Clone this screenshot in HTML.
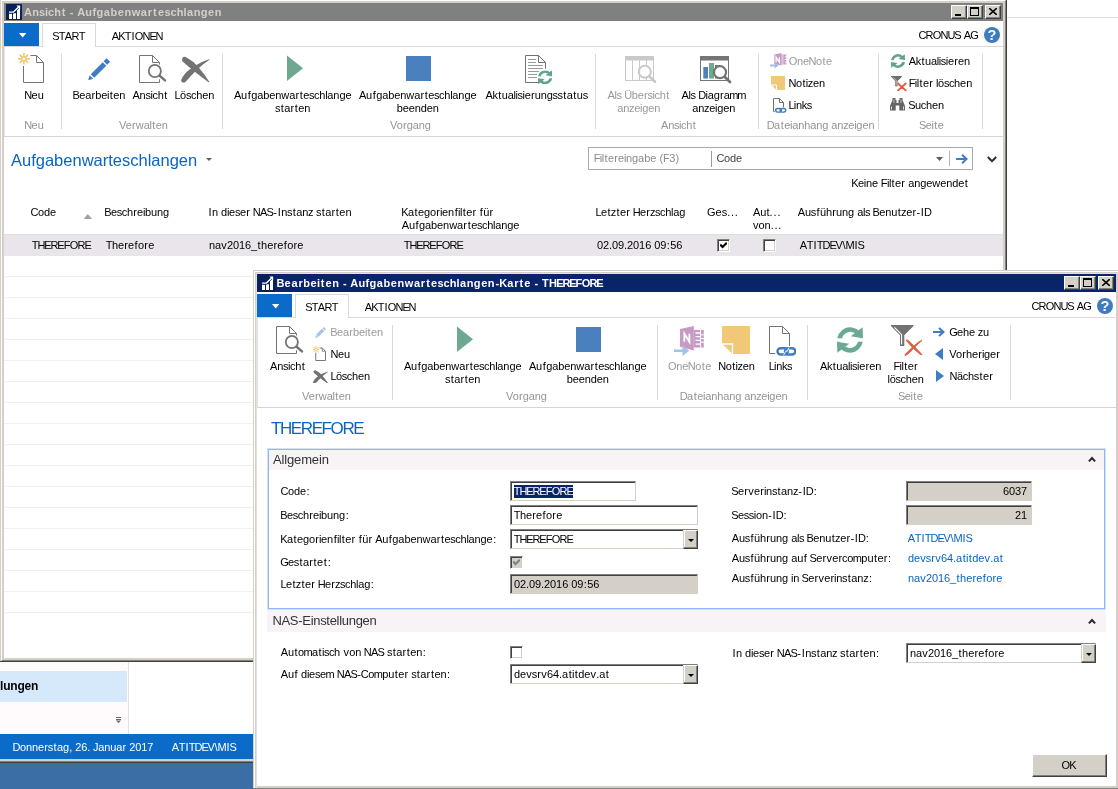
<!DOCTYPE html>
<html><head><meta charset="utf-8"><title>NAV</title>
<style>
*{box-sizing:border-box;margin:0;padding:0}
html,body{width:1118px;height:789px;overflow:hidden;background:#fff}
body{font-family:"Liberation Sans",sans-serif;font-size:11px;color:#000;position:relative;font-kerning:none}
.a{position:absolute}
.t{position:absolute;white-space:nowrap;line-height:13px;height:13px}
.c{text-align:center;transform:translateX(calc(-50% + .8px))}
.g{color:#9a9a9a}
.gl{color:#979397}
.sep{position:absolute;width:1px;background:#d9d9d9}
.win{position:absolute;background:#fff}
.tb{position:absolute;left:0;top:0;height:18px}
.tbtn{position:absolute;top:2px;width:16px;height:14px;background:#d4d0c8;border:1px solid;border-color:#fff #404040 #404040 #fff;box-shadow:inset -1px -1px 0 #808080}
.inp{position:absolute;background:#fff;border:1px solid;border-color:#808080 #d4d0c8 #d4d0c8 #808080;box-shadow:inset 1px 1px 0 #404040}
.inp.ro{background:#d4d0c8}
.inp>span{position:absolute;left:3px;top:3px;line-height:13px;white-space:nowrap}
.dd{position:absolute;right:-1px;top:0;bottom:-1px;width:15px;background:#d4d0c8;border:1px solid;border-color:#fff #404040 #404040 #d4d0c8;box-shadow:inset -1px -1px 0 #808080,inset 1px 0 0 #fff}
.dd:after{content:"";position:absolute;left:3.5px;top:8px;border:3px solid transparent;border-top:3px solid #000;border-bottom:none}
.cb{position:absolute;width:13px;height:13px;background:#fff;border:1px solid;border-color:#808080 #fff #fff #808080;box-shadow:inset 1px 1px 0 #404040,inset -1px -1px 0 #d4d0c8}
.lnk{color:#0a62c2}
.k0{letter-spacing:-0.95px;margin-left:-0.475px;margin-right:0.475px}.k1{letter-spacing:-0.10px;margin-left:-0.050px;margin-right:0.050px}.k2{letter-spacing:0.35px;margin-left:0.175px;margin-right:-0.175px}.k3{letter-spacing:-0.50px;margin-left:-0.250px;margin-right:0.250px}.k4{letter-spacing:0.95px;margin-left:0.475px;margin-right:-0.475px}.k5{letter-spacing:-0.05px;margin-left:-0.025px;margin-right:0.025px}.k6{letter-spacing:-0.35px;margin-left:-0.175px;margin-right:0.175px}.k7{letter-spacing:-0.70px;margin-left:-0.350px;margin-right:0.350px}.k8{letter-spacing:-1.35px;margin-left:-0.675px;margin-right:0.675px}.k9{letter-spacing:-1.15px;margin-left:-0.575px;margin-right:0.575px}.k10{letter-spacing:0.05px;margin-left:0.025px;margin-right:-0.025px}.k11{letter-spacing:0.30px;margin-left:0.150px;margin-right:-0.150px}.k12{letter-spacing:1.35px;margin-left:0.675px;margin-right:-0.675px}.k13{letter-spacing:0.90px;margin-left:0.450px;margin-right:-0.450px}.k14{letter-spacing:0.45px;margin-left:0.225px;margin-right:-0.225px}.k15{letter-spacing:0.70px;margin-left:0.350px;margin-right:-0.350px}.k16{letter-spacing:-0.55px;margin-left:-0.275px;margin-right:0.275px}.k17{letter-spacing:-1.55px;margin-left:-0.775px;margin-right:0.775px}.k18{letter-spacing:-0.45px;margin-left:-0.225px;margin-right:0.225px}.k19{letter-spacing:-1.10px;margin-left:-0.550px;margin-right:0.550px}.k20{letter-spacing:0.50px;margin-left:0.250px;margin-right:-0.250px}
</style></head><body><div id="root" style="position:absolute;left:0;top:0;width:1118px;height:789px;will-change:transform">


<svg width="0" height="0" style="position:absolute">
<defs>
 <!-- document outline 21x27 -->
 <symbol id="doc" viewBox="0 0 21 27"><path d="M.5 .5H13.5L20.5 7.5V26.5H.5Z" fill="#fff" stroke="#727272"/><path d="M13.5 .5V7.5H20.5" fill="none" stroke="#727272"/></symbol>
 <!-- view: doc + magnifier 28x28 -->
 <symbol id="view" viewBox="0 0 28 28"><path d="M.5 .5H13.5L20.5 7.5V27.5H.5Z" fill="#fff" stroke="#767476"/><path d="M13.5 .5V7.5H20.5" fill="none" stroke="#767476"/><circle cx="15.85" cy="16" r="8" fill="#fff"/><path d="M19.5 20L27 26.5" stroke="#fff" stroke-width="5"/><circle cx="15.85" cy="16" r="6.05" fill="#fff" stroke="#767476" stroke-width="1.8"/><path d="M20.6 20.8L26 25.4" stroke="#767476" stroke-width="2.5" stroke-linecap="round"/></symbol>
 <!-- star -->
 <symbol id="star" viewBox="0 0 12 12"><g stroke="#f1c465" stroke-width="1.5"><path d="M6 0V12M0 6H12M1.8 1.8L10.2 10.2M10.2 1.8L1.8 10.2"/></g><circle cx="6" cy="6" r="2.7" fill="#f1c465"/><circle cx="6" cy="6" r="1.5" fill="#fff"/></symbol>
 <!-- new: star + doc, 27x30 -->
 <symbol id="new" viewBox="0 0 27 31"><path d="M6.5 14V30.5H26.5V10.5L19.5 3.5H13.5" fill="#fff" stroke="#767476"/><path d="M19.5 3.5V10.5H26.5" fill="none" stroke="#767476"/><use href="#star" x=".9" y=".8" width="12" height="12"/></symbol>
 <!-- pencil 24x24 -->
 <symbol id="pencil" viewBox="0 0 22.5 22.5"><path d="M.2 22.3L1.7 17.3L5.2 20.8Z" fill="currentColor"/><path d="M2.73 16.23L14.73 4.23L18.27 7.77L6.27 19.77Z" fill="currentColor"/><path d="M15.63 3.33L18.63 .33L22.17 3.87L19.17 6.87Z" fill="currentColor"/></symbol>
 <!-- delete X 29x26 -->
 <symbol id="pencils" viewBox="0 0 22.5 22.5"><path d="M.2 22.3L2 16.2L6.3 20.5Z" fill="currentColor"/><path d="M2.6 15.4L14.2 3.8L18.7 8.3L7.1 19.9Z" fill="currentColor"/><path d="M15.4 2.6L18 0L22.5 4.5L19.9 7.1Z" fill="currentColor"/></symbol>
 <symbol id="del" viewBox="0 0 29 27"><path d="M1.3 2.2Q2.5 0 5.2 1.2Q12.5 5 17.8 11.5Q23.5 18.5 28.6 26.2Q28 26.6 27.2 26Q19.5 20.3 13.8 15.8Q6.5 9.8 1.6 5.4Q.6 3.6 1.3 2.2Z" fill="#747274"/><path d="M.4 23.4Q3 17.5 8.6 13.4Q17.5 6.5 28.8 2.9Q29 3.3 28.4 3.7Q20.5 9 15.2 14.6Q9 20.8 4.4 26Q2.2 27 .8 26Q-.2 25 .4 23.4Z" fill="#747274"/></symbol>
 <!-- refresh 26x26 -->
 <symbol id="refresh" viewBox="0 0 26 26"><g fill="none" stroke="currentColor" stroke-width="4.7"><path d="M2.6 14.5A10.65 10.65 0 0 1 21.3 6.4"/><path d="M23.4 11.5A10.65 10.65 0 0 1 4.7 19.6"/></g><rect x="0" y="11.3" width="26" height="3.4" fill="#fff"/><path d="M25.6 .3L26 11.3L13.8 9.3Z" fill="currentColor"/><path d="M.4 25.7L0 14.7L12.2 16.7Z" fill="currentColor"/></symbol>
 <!-- funnel + red x 32x31 -->
 <symbol id="funnel" viewBox="0 0 32 31"><path d="M0 0H22.5V1L13.3 10.2V21H9V10.2L0 1Z" fill="#737173"/><path d="M3.5 2.3L10.6 9.6V19.6" fill="none" stroke="#fff" stroke-width="1.1"/><g fill="#dc5f3f" stroke="#dc5f3f" stroke-width=".9" stroke-linejoin="round"><path d="M15 15.2Q16 14.4 17.4 15.6Q24 22 31 29.6Q30.4 30.2 29 29.2Q21 23 15 15.2Z"/><path d="M31 15.4Q29.5 15.6 27 17.5Q20 23 14 29.6Q13.6 30.8 15.2 30.2Q18 28.5 21.5 24.5Q26 19.5 31 15.4Z"/></g></symbol>
 <!-- onenote 31x30 -->
 <symbol id="onenote" viewBox="0 0 31 30"><path d="M6 3L19.8 0V24.5L6 20.8Z" fill="#c79ac4"/><path d="M19.8 3.9H29.8V21.5H19.8Z" fill="#c79ac4"/><g stroke="#fff" stroke-width="1.3"><path d="M21.5 7H26M21.5 10.7H26M21.5 14.4H26M21.5 18.1H26"/><path d="M26.6 3.9V21.5" stroke-width="1"/><path d="M27 8.8H30M27 12.5H30M27 16.2H30" stroke-width="1"/></g><path d="M10.3 15.8V7.7L15.4 15.8V7.7" fill="none" stroke="#fff" stroke-width="1.8"/><path d="M0 23.5H8.5V19.6L15.2 24.8L8.5 30V26H0Z" fill="#a3c3e4"/></symbol>
 <!-- note 28x28 -->
 <symbol id="note" viewBox="0 0 28 28"><path d="M0 0H28V28H10.5L0 17.5Z" fill="#f1c778"/><path d="M0 18H10.5V28" fill="none" stroke="#fff" stroke-width="1.3"/></symbol>
 <!-- link doc 27x30 -->
 <symbol id="linkdoc" viewBox="0 0 27 30"><path d="M.5 .5H13.5L20.5 7.5V27.5H.5Z" fill="#fff" stroke="#767476"/><path d="M13.5 .5V7.5H20.5" fill="none" stroke="#767476"/><rect x="6.3" y="20" width="21" height="10" fill="#fff"/><g fill="none" stroke="#3f7cc4" stroke-width="2.4"><rect x="8.5" y="22.2" width="10.3" height="6.3" rx="3.15"/><rect x="16" y="22.2" width="10.3" height="6.3" rx="3.15"/></g><path d="M14.6 29.2L17.2 24.6M17.6 26L20.2 21.4" stroke="#fff" stroke-width=".9"/></symbol>
</defs>
</svg>
<!-- ===== background pieces (other window behind) ===== -->
<div class="a" id="bgline" style="left:1007px;top:17px;width:111px;height:1px;background:#e3e3e3"></div>
<div class="a" id="navpane" style="left:0;top:662px;width:128px;height:72px;background:#fffbfd"></div>
<div class="a" style="left:0;top:671px;width:127px;height:31px;background:#d6e9fb"></div>
<div class="t" style="left:0;top:680px;font-weight:700;font-size:12px;letter-spacing:-0.2px">lungen</div><svg class="a" style="left:116px;top:717px" width="5" height="6" viewBox="0 0 5 6"><path d="M0 .5H5M0 2.5H5" stroke="#666" stroke-width="1"/><path d="M0 3.5H5L2.5 6Z" fill="#666"/></svg>
<div class="a" style="left:128px;top:662px;width:1px;height:72px;background:#e2e2e2"></div>
<div class="a" id="status" style="left:0;top:734px;width:253px;height:25px;background:#0a6bc8"></div>
<div class="t" style="left:13px;top:741px;color:#fff"><span class=k0>D</span><span class=k1>onne</span><span class=k2>r</span><span class=k3>s</span><span class=k4>t</span><span class=k1>ag</span><span class=k5>, </span><span class=k1>26</span><span class=k5>. </span><span class=k3>J</span><span class=k1>anua</span><span class=k2>r</span><span class=k5> </span><span class=k1>2017</span></div>
<div class="t" style="left:172px;top:741px;color:#fff"><span class=k6>A</span><span class=k7>T</span><span class=k4>I</span><span class=k7>T</span><span class=k0>D</span><span class=k8>EV</span><span class=k4>\</span><span class=k9>M</span><span class=k4>I</span><span class=k8>S</span></div>
<div class="a" style="left:0;top:759px;width:253px;height:2px;background:#d4d0c8"></div><div class="a" style="left:0;top:761px;width:253px;height:1px;background:#808080"></div><div class="a" style="left:0;top:762px;width:253px;height:1px;background:#404040"></div>
<div class="a" style="left:0;top:763px;width:253px;height:26px;background:#3a6ea5"></div>

<!-- ===== WINDOW 1 ===== -->
<div class="a" id="w1f" style="left:0;top:0;width:1007px;height:662px;background:#d4d0c8;border-right:1px solid #404040;border-bottom:1px solid #404040"></div>
<div class="a" style="left:1px;top:0;width:1005px;height:661px;border:1px solid #fff;border-right-color:#808080;border-bottom-color:#808080"></div>
<div class="a" id="w1c" style="left:4px;top:3px;width:999px;height:655px;background:#fff"></div>
<div class="a" id="w1tb" style="left:4px;top:3px;width:999px;height:18px;background:#808080"></div>
<svg class="a" style="left:6px;top:4px" width="16" height="16" viewBox="0 0 16 16"><rect width="16" height="16" fill="#03215c"/><rect x="3" y="9.6" width="3" height="5.4" fill="#fff"/><rect x="7" y="9.2" width="3" height="5.8" fill="#fff"/><rect x="11" y="3" width="3" height="12" fill="#fff"/><path d="M2.6 8.1H7.4L12.6 2.9" stroke="#03215c" stroke-width="2.6" fill="none"/><path d="M3 8.1H7.4L12.6 2.9" stroke="#fff" stroke-width="1.35" fill="none"/><path d="M10.4 1.6H14.2V5.4Z" fill="#fff"/></svg>
<div class="t" style="left:24px;top:6px;font-weight:700;color:#d4d0c8"><span class=k10>A</span><span class=k11>n</span><span class=k1>s</span><span class=k5>i</span><span class=k1>c</span><span class=k11>h</span><span class=k12>t</span><span class=k5> </span><span class=k12>-</span><span class=k5> </span><span class=k10>A</span><span class=k11>u</span><span class=k2>f</span><span class=k11>g</span><span class=k13>a</span><span class=k11>b</span><span class=k13>e</span><span class=k11>n</span><span class=k14>w</span><span class=k13>a</span><span class=k15>r</span><span class=k12>t</span><span class=k13>e</span><span class=k1>sc</span><span class=k11>h</span><span class=k5>l</span><span class=k13>a</span><span class=k11>ng</span><span class=k13>e</span><span class=k11>n</span></div>
<div class="tbtn" style="left:951px;top:5px"><i class="a" style="left:3px;top:8px;width:6px;height:2px;background:#000"></i></div>
<div class="tbtn" style="left:967px;top:5px"><i class="a" style="left:2px;top:1px;width:9px;height:9px;border:1px solid #000;border-top-width:2px"></i></div>
<div class="tbtn" style="left:985px;top:5px"><svg class="a" style="left:3px;top:2px" width="8" height="7" viewBox="0 0 8 7"><path d="M0 0L8 7M8 0L0 7" stroke="#000" stroke-width="1.6"/></svg></div>

<!-- tabs -->
<div class="a" style="left:4px;top:46px;width:999px;height:1px;background:#d9d9d9"></div>
<div class="a" style="left:4px;top:23px;width:35px;height:23px;background:#0a6bc8"></div>
<svg class="a" style="left:19px;top:33px" width="7.4" height="4.6" viewBox="0 0 7.4 4.6"><path d="M0 0H7.4L3.7 4.6Z" fill="#fff"/></svg>
<div class="a" style="left:42px;top:23px;width:54px;height:24px;background:#fff;border:1px solid #d9d9d9;border-bottom:none"></div>
<div class="t" style="left:53px;top:30px"><span class=k8>S</span><span class=k7>T</span><span class=k6>A</span><span class=k0>R</span><span class=k7>T</span></div>
<div class="t" style="left:112px;top:30px"><span class=k6>A</span><span class=k8>K</span><span class=k7>T</span><span class=k4>I</span><span class=k16>O</span><span class=k0>N</span><span class=k8>E</span><span class=k0>N</span></div>
<div class="t" style="left:919px;top:29px"><span class=k0>CR</span><span class=k16>O</span><span class=k0>NU</span><span class=k8>S</span><span class=k5> </span><span class=k6>A</span><span class=k17>G</span></div>
<svg class="a" style="left:984px;top:27px" width="16" height="16" viewBox="0 0 16 16"><circle cx="8" cy="8" r="8" fill="#3f7cbc"/><text x="8" y="13.2" font-family="Liberation Sans" font-weight="700" font-size="14.5" fill="#fff" text-anchor="middle">?</text></svg>

<!-- ribbon -->
<div class="a" style="left:4px;top:136px;width:999px;height:1px;background:#d5d5d5"></div><div class="a" style="left:4px;top:47px;width:1px;height:89px;background:#e4e4e4"></div>
<div class="sep" style="left:61px;top:54px;height:75px"></div>
<div class="sep" style="left:222px;top:54px;height:75px"></div>
<div class="sep" style="left:595px;top:54px;height:75px"></div>
<div class="sep" style="left:758px;top:54px;height:75px"></div>
<div class="sep" style="left:878px;top:54px;height:75px"></div>
<div class="sep" style="left:982px;top:54px;height:75px"></div>

<div class="t c" style="left:33.4px;top:89px"><span class=k0>N</span><span class=k1>eu</span></div>
<div class="t c" style="left:98.5px;top:89px"><span class=k8>B</span><span class=k1>ea</span><span class=k2>r</span><span class=k1>be</span><span class=k18>i</span><span class=k4>t</span><span class=k1>en</span></div>
<div class="t c" style="left:149.4px;top:89px"><span class=k6>A</span><span class=k1>n</span><span class=k3>s</span><span class=k18>i</span><span class=k3>c</span><span class=k1>h</span><span class=k4>t</span></div>
<div class="t c" style="left:193.9px;top:89px"><span class=k19>L</span><span class=k1>ö</span><span class=k3>sc</span><span class=k1>hen</span></div>
<div class="t c" style="left:292px;top:89px"><span class=k6>A</span><span class=k1>u</span><span class=k4>f</span><span class=k1>gaben</span><span class=k10>w</span><span class=k1>a</span><span class=k2>r</span><span class=k4>t</span><span class=k1>e</span><span class=k3>sc</span><span class=k1>h</span><span class=k18>l</span><span class=k1>ange</span></div>
<div class="t c" style="left:292px;top:102px"><span class=k3>s</span><span class=k4>t</span><span class=k1>a</span><span class=k2>r</span><span class=k4>t</span><span class=k1>en</span></div>
<div class="t c" style="left:417px;top:89px"><span class=k6>A</span><span class=k1>u</span><span class=k4>f</span><span class=k1>gaben</span><span class=k10>w</span><span class=k1>a</span><span class=k2>r</span><span class=k4>t</span><span class=k1>e</span><span class=k3>sc</span><span class=k1>h</span><span class=k18>l</span><span class=k1>ange</span></div>
<div class="t c" style="left:417px;top:102px"><span class=k1>beenden</span></div>
<div class="t c" style="left:536px;top:89px"><span class=k6>A</span><span class=k3>k</span><span class=k4>t</span><span class=k1>ua</span><span class=k18>li</span><span class=k3>s</span><span class=k18>i</span><span class=k1>e</span><span class=k2>r</span><span class=k1>ung</span><span class=k3>ss</span><span class=k4>t</span><span class=k1>a</span><span class=k4>t</span><span class=k1>u</span><span class=k3>s</span></div>
<div class="t c g" style="left:638px;top:89px"><span class=k6>A</span><span class=k18>l</span><span class=k3>s</span><span class=k5> </span><span class=k0>Ü</span><span class=k1>be</span><span class=k2>r</span><span class=k3>s</span><span class=k18>i</span><span class=k3>c</span><span class=k1>h</span><span class=k4>t</span></div>
<div class="t c g" style="left:638px;top:102px"><span class=k1>an</span><span class=k3>z</span><span class=k1>e</span><span class=k18>i</span><span class=k1>gen</span></div>
<div class="t c" style="left:713px;top:89px"><span class=k6>A</span><span class=k18>l</span><span class=k3>s</span><span class=k5> </span><span class=k0>D</span><span class=k18>i</span><span class=k1>ag</span><span class=k2>r</span><span class=k1>a</span><span class=k9>mm</span></div>
<div class="t c" style="left:713px;top:102px"><span class=k1>an</span><span class=k3>z</span><span class=k1>e</span><span class=k18>i</span><span class=k1>gen</span></div>
<div class="t g" style="left:789px;top:55px"><span class=k16>O</span><span class=k1>ne</span><span class=k0>N</span><span class=k1>o</span><span class=k4>t</span><span class=k1>e</span></div>
<div class="t" style="left:789px;top:77px"><span class=k0>N</span><span class=k1>o</span><span class=k4>t</span><span class=k18>i</span><span class=k3>z</span><span class=k1>en</span></div>
<div class="t" style="left:789px;top:99px"><span class=k19>L</span><span class=k18>i</span><span class=k1>n</span><span class=k3>ks</span></div>
<div class="t" style="left:909px;top:55px"><span class=k6>A</span><span class=k3>k</span><span class=k4>t</span><span class=k1>ua</span><span class=k18>li</span><span class=k3>s</span><span class=k18>i</span><span class=k1>e</span><span class=k2>r</span><span class=k1>en</span></div>
<div class="t" style="left:909px;top:77px"><span class=k7>F</span><span class=k18>il</span><span class=k4>t</span><span class=k1>e</span><span class=k2>r</span><span class=k5> </span><span class=k18>l</span><span class=k1>ö</span><span class=k3>sc</span><span class=k1>hen</span></div>
<div class="t" style="left:909px;top:99px"><span class=k8>S</span><span class=k1>u</span><span class=k3>c</span><span class=k1>hen</span></div>
<div class="t c gl" style="left:33.4px;top:119px"><span class=k0>N</span><span class=k1>eu</span></div>
<div class="t c gl" style="left:143px;top:119px"><span class=k8>V</span><span class=k1>e</span><span class=k2>r</span><span class=k10>w</span><span class=k1>a</span><span class=k18>l</span><span class=k4>t</span><span class=k1>en</span></div>
<div class="t c gl" style="left:410px;top:119px"><span class=k8>V</span><span class=k1>o</span><span class=k2>r</span><span class=k1>gang</span></div>
<div class="t c gl" style="left:678px;top:119px"><span class=k6>A</span><span class=k1>n</span><span class=k3>s</span><span class=k18>i</span><span class=k3>c</span><span class=k1>h</span><span class=k4>t</span></div>
<div class="t c gl" style="left:820px;top:119px"><span class=k0>D</span><span class=k1>a</span><span class=k4>t</span><span class=k1>e</span><span class=k18>i</span><span class=k1>anhang</span><span class=k5> </span><span class=k1>an</span><span class=k3>z</span><span class=k1>e</span><span class=k18>i</span><span class=k1>gen</span></div>
<div class="t c gl" style="left:931px;top:119px"><span class=k8>S</span><span class=k1>e</span><span class=k18>i</span><span class=k4>t</span><span class=k1>e</span></div>


<!-- w1 icons -->
<svg class="a" style="left:17px;top:52px" width="27" height="31"><use href="#new"/></svg>
<svg class="a" style="left:87.8px;top:57.5px;color:#3f7cc4" width="22.5" height="22.5"><use href="#pencil"/></svg>
<svg class="a" style="left:139px;top:55px" width="28" height="28"><use href="#view"/></svg>
<svg class="a" style="left:180.5px;top:55.5px" width="29" height="27"><use href="#del"/></svg>
<svg class="a" style="left:287px;top:55px" width="17" height="27" viewBox="0 0 17 27"><path d="M0 .5L16 13.3L0 26Z" fill="#6fa890"/></svg>
<div class="a" style="left:406px;top:56px;width:25px;height:25px;background:#4a80be"></div>
<svg class="a" style="left:525px;top:55px" width="30" height="30" viewBox="0 0 30 30"><path d="M.5 .5H13.5L20.5 7.5V27.5H.5Z" fill="#fff" stroke="#727072"/><path d="M13.5 .5V7.5H20.5" fill="none" stroke="#727072"/><path d="M3 4.5H11M3 7.5H11M3 10.5H18M3 13.5H18M3 16.5H14M3 19.5H12M3 22.5H12" stroke="#9b999b"/><circle cx="20" cy="22" r="8.2" fill="#fff"/><svg x="13" y="15.2" width="14.2" height="14.2" style="color:#5fa48a"><use href="#refresh"/></svg></svg>
<svg class="a" style="left:625px;top:56px" width="32" height="28" viewBox="0 0 32 28"><rect x=".5" y=".5" width="28" height="24" fill="#fff" stroke="#c9c9c9"/><rect x="0" y="0" width="29" height="4.5" fill="#c9c9c9"/><path d="M7.5 4V24M14.5 4V24M21.5 4V24" stroke="#c9c9c9"/><circle cx="19.8" cy="15.8" r="6" fill="#fff" stroke="#c9c9c9" stroke-width="2"/><path d="M24.3 20.3L30 25.8" stroke="#c9c9c9" stroke-width="2.6" stroke-linecap="round"/></svg>
<svg class="a" style="left:700px;top:56px" width="32" height="28" viewBox="0 0 32 28"><rect x=".5" y=".5" width="28" height="24" fill="#fff" stroke="#767476"/><rect x="0" y="0" width="29" height="4.5" fill="#767476"/><rect x="3.3" y="11" width="4.7" height="11.5" fill="#4a80be"/><rect x="9" y="7" width="5" height="15.5" fill="#6fa890"/><rect x="15" y="9" width="5" height="13.5" fill="#767476"/><circle cx="20" cy="16.2" r="6" fill="#fff" stroke="#767476" stroke-width="2.2"/><path d="M24.6 20.8L30 26" stroke="#767476" stroke-width="2.8" stroke-linecap="round"/></svg>
<svg class="a" style="left:770px;top:53px" width="17" height="16" viewBox="0 0 17 16"><path d="M4.3 1.6L11.6 0V12.6L4.3 11Z" fill="#c79ac4"/><rect x="11.6" y="1.5" width="4.6" height="10" fill="#c79ac4"/><path d="M12.9 1.5V11.5" stroke="#fff" stroke-width=".7"/><path d="M14.6 3.9H16.2M14.6 6.5H16.2M14.6 9.1H16.2" stroke="#fff" stroke-width=".8"/><path d="M6.1 9.3V4.2L9.4 9.3V4.2" fill="none" stroke="#fff" stroke-width="1.25"/><path d="M0 11.6H4.6V9.6L8.6 12.6L4.6 15.6V13.6H0Z" fill="#9dbfe2"/></svg>
<svg class="a" style="left:771px;top:76px" width="14" height="14" viewBox="0 0 14 14"><path d="M0 0H14V14H5.5L0 8.5Z" fill="#f1c778"/><path d="M0 9H5.5V14" fill="none" stroke="#fff" stroke-width="1"/></svg>
<svg class="a" style="left:773px;top:98px" width="14" height="16" viewBox="0 0 14 16"><path d="M.5 .5H6.5L10.5 4.5V13.5H.5Z" fill="#fff" stroke="#727072"/><path d="M6.5 .5V4.5H10.5" fill="none" stroke="#727072"/><rect x="1.6" y="9.3" width="12.4" height="6.7" fill="#fff"/><g fill="none" stroke="#3f7cc4" stroke-width="1.4"><rect x="2.7" y="10.5" width="5.6" height="3.6" rx="1.8"/><rect x="7.1" y="10.5" width="5.6" height="3.6" rx="1.8"/></g></svg>
<svg class="a" style="left:891px;top:54.2px;color:#5fa48a" width="14" height="14"><use href="#refresh"/></svg>
<svg class="a" style="left:891px;top:76px" width="15.5" height="15" viewBox="0 0 32 31"><path d="M0 0H22.5V1.5L13.6 10.2V21H8.6V10.2L0 1.5Z" fill="#6f6d6f"/><path d="M4.5 3L10.8 9.5V19" fill="none" stroke="#fff" stroke-width="1.2"/><path d="M14.5 15.5L30.5 30M30.5 15.5L14.5 30" stroke="#dc5f3f" stroke-width="3.6" stroke-linecap="round"/></svg>
<svg class="a" style="left:890px;top:98px" width="15" height="13" viewBox="0 0 15 13"><path d="M2.5 0H5.5V2H6.5V5H8.5V2H9.5V0H12.5V2L15 8V12.5H9.3V7.5H5.7V12.5H0V8L2.5 2Z" fill="#656365"/><path d="M1.5 8.5V11.5M13.5 8.5V11.5" stroke="#fff" stroke-width=".8"/><path d="M4 1.5V5M11 1.5V5" stroke="#fff" stroke-width=".6"/></svg>
<!-- page header -->
<div class="t" style="left:11px;top:150px;font-size:16.5px;line-height:20px;height:20px;color:#0a64c4">Aufgabenwarteschlangen</div>
<svg class="a" style="left:206px;top:158px" width="6" height="3" viewBox="0 0 6 3"><path d="M0 0H6L3 3Z" fill="#5e5e5e"/></svg>
<div class="a" style="left:588px;top:147px;width:385px;height:23px;border:1px solid #a9a9a9;background:#fff"></div>
<div class="t" style="left:594px;top:152px;color:#8c8c8c"><span class=k7>F</span><span class=k18>il</span><span class=k4>t</span><span class=k1>e</span><span class=k2>r</span><span class=k1>e</span><span class=k18>i</span><span class=k1>ngabe</span><span class=k5> </span><span class=k2>(</span><span class=k7>F</span><span class=k1>3</span><span class=k2>)</span></div>
<div class="a" style="left:711px;top:151px;width:1px;height:16px;background:#9a9a9a"></div>
<div class="t" style="left:717px;top:152px;color:#444"><span class=k0>C</span><span class=k1>ode</span></div>
<svg class="a" style="left:936px;top:157px" width="7" height="4" viewBox="0 0 7 4"><path d="M0 0H7L3.5 4Z" fill="#5e5e5e"/></svg>
<div class="a" style="left:949px;top:151px;width:1px;height:15px;background:#b4b4b4"></div>
<svg class="a" style="left:956px;top:154px" width="12" height="10" viewBox="0 0 12 10"><path d="M0 5H10M6 .8L10.6 5L6 9.2" fill="none" stroke="#3f7cc4" stroke-width="2"/></svg>
<svg class="a" style="left:986.5px;top:155.5px" width="10" height="7" viewBox="0 0 10 7"><path d="M.8 1L5 5.2L9.2 1" stroke="#2a2a2a" stroke-width="2" fill="none"/></svg>
<div class="t" style="left:852px;top:177px"><span class=k8>K</span><span class=k1>e</span><span class=k18>i</span><span class=k1>ne</span><span class=k5> </span><span class=k7>F</span><span class=k18>il</span><span class=k4>t</span><span class=k1>e</span><span class=k2>r</span><span class=k5> </span><span class=k1>ange</span><span class=k10>w</span><span class=k1>ende</span><span class=k4>t</span></div>

<!-- list header -->
<div class="t" style="left:31px;top:206px"><span class=k0>C</span><span class=k1>ode</span></div>
<svg class="a" style="left:83px;top:213.6px" width="9.6" height="5.6" viewBox="0 0 9.6 5.6"><path d="M0 5.6L4.8 0L9.6 5.6Z" fill="#a2a2a2"/></svg>
<div class="t" style="left:105px;top:206px"><span class=k8>B</span><span class=k1>e</span><span class=k3>sc</span><span class=k1>h</span><span class=k2>r</span><span class=k1>e</span><span class=k18>i</span><span class=k1>bung</span></div>
<div class="t" style="left:208px;top:206px"><span class=k4>I</span><span class=k1>n</span><span class=k5> </span><span class=k1>d</span><span class=k18>i</span><span class=k1>e</span><span class=k3>s</span><span class=k1>e</span><span class=k2>r</span><span class=k5> </span><span class=k0>N</span><span class=k6>A</span><span class=k8>S</span><span class=k2>-</span><span class=k4>I</span><span class=k1>n</span><span class=k3>s</span><span class=k4>t</span><span class=k1>an</span><span class=k3>z</span><span class=k5> </span><span class=k3>s</span><span class=k4>t</span><span class=k1>a</span><span class=k2>r</span><span class=k4>t</span><span class=k1>en</span></div>
<div class="t" style="left:402px;top:206px"><span class=k8>K</span><span class=k1>a</span><span class=k4>t</span><span class=k1>ego</span><span class=k2>r</span><span class=k18>i</span><span class=k1>en</span><span class=k4>f</span><span class=k18>il</span><span class=k4>t</span><span class=k1>e</span><span class=k2>r</span><span class=k5> </span><span class=k4>f</span><span class=k1>ü</span><span class=k2>r</span></div>
<div class="t" style="left:402px;top:219px"><span class=k6>A</span><span class=k1>u</span><span class=k4>f</span><span class=k1>gaben</span><span class=k10>w</span><span class=k1>a</span><span class=k2>r</span><span class=k4>t</span><span class=k1>e</span><span class=k3>sc</span><span class=k1>h</span><span class=k18>l</span><span class=k1>ange</span></div>
<div class="t" style="left:596px;top:206px"><span class=k19>L</span><span class=k1>e</span><span class=k4>t</span><span class=k3>z</span><span class=k4>t</span><span class=k1>e</span><span class=k2>r</span><span class=k5> </span><span class=k0>H</span><span class=k1>e</span><span class=k2>r</span><span class=k3>zsc</span><span class=k1>h</span><span class=k18>l</span><span class=k1>ag</span></div>
<div class="t nofit" style="left:707px;top:206px">Ges<span style="letter-spacing:0.7px">...</span></div>
<div class="t nofit" style="left:753px;top:206px">Aut<span style="letter-spacing:0.9px">...</span></div>
<div class="t nofit" style="left:753px;top:219px">von<span style="letter-spacing:0.7px">...</span></div>
<div class="t" style="left:798px;top:206px"><span class=k6>A</span><span class=k1>u</span><span class=k3>s</span><span class=k4>f</span><span class=k1>üh</span><span class=k2>r</span><span class=k1>ung</span><span class=k5> </span><span class=k1>a</span><span class=k18>l</span><span class=k3>s</span><span class=k5> </span><span class=k8>B</span><span class=k1>enu</span><span class=k4>t</span><span class=k3>z</span><span class=k1>e</span><span class=k2>r-</span><span class=k4>I</span><span class=k0>D</span></div>
<!-- row -->
<div class="a" style="left:4px;top:234px;width:999px;height:22px;background:#e9e5ea;border-top:1px solid #e0dde2"></div>
<div class="t" style="left:32px;top:239px"><span class=k7>T</span><span class=k0>H</span><span class=k8>E</span><span class=k0>R</span><span class=k8>E</span><span class=k7>F</span><span class=k16>O</span><span class=k0>R</span><span class=k8>E</span></div>
<div class="t" style="left:106px;top:239px"><span class=k7>T</span><span class=k1>he</span><span class=k2>r</span><span class=k1>e</span><span class=k4>f</span><span class=k1>o</span><span class=k2>r</span><span class=k1>e</span></div>
<div class="t" style="left:209px;top:239px"><span class=k1>na</span><span class=k20>v</span><span class=k1>2016_</span><span class=k4>t</span><span class=k1>he</span><span class=k2>r</span><span class=k1>e</span><span class=k4>f</span><span class=k1>o</span><span class=k2>r</span><span class=k1>e</span></div>
<div class="t" style="left:404px;top:239px"><span class=k7>T</span><span class=k0>H</span><span class=k8>E</span><span class=k0>R</span><span class=k8>E</span><span class=k7>F</span><span class=k16>O</span><span class=k0>R</span><span class=k8>E</span></div>
<div class="t" style="left:597px;top:239px"><span class=k1>02</span><span class=k5>.</span><span class=k1>09</span><span class=k5>.</span><span class=k1>2016</span><span class=k5> </span><span class=k1>09</span><span class=k4>:</span><span class=k1>56</span></div>
<div class="cb" style="left:717px;top:239px"><svg class="a" style="left:2px;top:2px" width="7" height="7" viewBox="0 0 7 7"><path d="M.2 2.6L2.6 5L6.8 .8" stroke="#000" stroke-width="2.1" fill="none"/></svg></div>
<div class="cb" style="left:763px;top:239px"></div>
<div class="t" style="left:800px;top:239px"><span class=k6>A</span><span class=k7>T</span><span class=k4>I</span><span class=k7>T</span><span class=k0>D</span><span class=k8>EV</span><span class=k4>\</span><span class=k9>M</span><span class=k4>I</span><span class=k8>S</span></div>
<!-- grid lines -->
<div class="a" id="gridl" style="left:4px;top:276px;width:999px;height:338px;background:repeating-linear-gradient(#f3eef2 0,#f3eef2 1px,transparent 1px,transparent 21px)"></div>

<!-- ===== WINDOW 2 ===== -->
<div class="a" id="w2f" style="left:253px;top:270px;width:865px;height:519px;background:#d4d0c8;border-bottom:1px solid #808080"></div>
<div class="a" style="left:254px;top:271px;width:864px;height:517px;border:1px solid #fff;border-right:none;border-bottom:none"></div>
<div class="a" style="left:256px;top:273px;width:862px;height:515px;border:1px solid #e4e0d8;border-right:none;border-bottom:none"></div><div class="a" id="w2c" style="left:257px;top:274px;width:859px;height:512px;background:#fff"></div>
<div class="a" id="w2tb" style="left:257px;top:274px;width:859px;height:18px;background:#0a246a"></div>

<svg class="a" style="left:258px;top:274px" width="17" height="18" viewBox="-1 -1 17 18"><rect x="-1" y="-1" width="17" height="18" fill="#06205c"/><rect x="3" y="9.6" width="3" height="5.4" fill="#fff"/><rect x="7" y="9.2" width="3" height="5.8" fill="#fff"/><rect x="11" y="3" width="3" height="12" fill="#fff"/><path d="M2.6 8.1H7.4L12.6 2.9" stroke="#03215c" stroke-width="2.6" fill="none"/><path d="M3 8.1H7.4L12.6 2.9" stroke="#fff" stroke-width="1.35" fill="none"/><path d="M10.4 1.6H14.2V5.4Z" fill="#fff"/></svg>
<div class="t" style="left:277px;top:277px;font-weight:700;color:#fff"><span class=k0>B</span><span class=k13>ea</span><span class=k15>r</span><span class=k11>b</span><span class=k13>e</span><span class=k5>i</span><span class=k12>t</span><span class=k13>e</span><span class=k11>n</span><span class=k5> </span><span class=k12>-</span><span class=k5> </span><span class=k10>A</span><span class=k11>u</span><span class=k2>f</span><span class=k11>g</span><span class=k13>a</span><span class=k11>b</span><span class=k13>e</span><span class=k11>n</span><span class=k14>w</span><span class=k13>a</span><span class=k15>r</span><span class=k12>t</span><span class=k13>e</span><span class=k1>sc</span><span class=k11>h</span><span class=k5>l</span><span class=k13>a</span><span class=k11>ng</span><span class=k13>e</span><span class=k11>n</span><span class=k12>-</span><span class=k0>K</span><span class=k13>a</span><span class=k15>r</span><span class=k12>t</span><span class=k13>e</span><span class=k5> </span><span class=k12>-</span><span class=k5> </span><span class=k11>T</span><span class=k10>H</span><span class=k8>E</span><span class=k0>R</span><span class=k8>E</span><span class=k7>F</span><span class=k16>O</span><span class=k0>R</span><span class=k8>E</span></div>
<div class="tbtn" style="left:1064px;top:276px"><i class="a" style="left:3px;top:8px;width:6px;height:2px;background:#000"></i></div>
<div class="tbtn" style="left:1080px;top:276px"><i class="a" style="left:2px;top:1px;width:9px;height:9px;border:1px solid #000;border-top-width:2px"></i></div>
<div class="tbtn" style="left:1098px;top:276px"><svg class="a" style="left:3px;top:2px" width="8" height="7" viewBox="0 0 8 7"><path d="M0 0L8 7M8 0L0 7" stroke="#000" stroke-width="1.6"/></svg></div>

<!-- tabs -->
<div class="a" style="left:257px;top:317px;width:858px;height:1px;background:#d9d9d9"></div>
<div class="a" style="left:257px;top:294px;width:35px;height:23px;background:#0a6bc8"></div>
<svg class="a" style="left:272px;top:304px" width="7.4" height="4.6" viewBox="0 0 7.4 4.6"><path d="M0 0H7.4L3.7 4.6Z" fill="#fff"/></svg>
<div class="a" style="left:295px;top:294px;width:54px;height:24px;background:#fff;border:1px solid #d9d9d9;border-bottom:none"></div>
<div class="t" style="left:306px;top:301px"><span class=k8>S</span><span class=k7>T</span><span class=k6>A</span><span class=k0>R</span><span class=k7>T</span></div>
<div class="t" style="left:365px;top:301px"><span class=k6>A</span><span class=k8>K</span><span class=k7>T</span><span class=k4>I</span><span class=k16>O</span><span class=k0>N</span><span class=k8>E</span><span class=k0>N</span></div>
<div class="t" style="left:1032px;top:300px"><span class=k0>CR</span><span class=k16>O</span><span class=k0>NU</span><span class=k8>S</span><span class=k5> </span><span class=k6>A</span><span class=k17>G</span></div>
<svg class="a" style="left:1097px;top:298px" width="16" height="16" viewBox="0 0 16 16"><circle cx="8" cy="8" r="8" fill="#3f7cbc"/><text x="8" y="13.2" font-family="Liberation Sans" font-weight="700" font-size="14.5" fill="#fff" text-anchor="middle">?</text></svg>

<!-- ribbon -->
<div class="a" style="left:257px;top:407px;width:859px;height:1px;background:#d5d5d5"></div><div class="a" style="left:257px;top:318px;width:1px;height:89px;background:#e4e4e4"></div>
<div class="sep" style="left:392px;top:325px;height:75px"></div>
<div class="sep" style="left:657px;top:325px;height:75px"></div>
<div class="sep" style="left:807px;top:325px;height:75px"></div>
<div class="sep" style="left:1010px;top:325px;height:75px"></div>

<div class="t c" style="left:287px;top:360px"><span class=k6>A</span><span class=k1>n</span><span class=k3>s</span><span class=k18>i</span><span class=k3>c</span><span class=k1>h</span><span class=k4>t</span></div>
<div class="t g" style="left:331px;top:326px"><span class=k8>B</span><span class=k1>ea</span><span class=k2>r</span><span class=k1>be</span><span class=k18>i</span><span class=k4>t</span><span class=k1>en</span></div>
<div class="t" style="left:331px;top:348px"><span class=k0>N</span><span class=k1>eu</span></div>
<div class="t" style="left:331px;top:370px"><span class=k19>L</span><span class=k1>ö</span><span class=k3>sc</span><span class=k1>hen</span></div>
<div class="t c" style="left:462px;top:360px"><span class=k6>A</span><span class=k1>u</span><span class=k4>f</span><span class=k1>gaben</span><span class=k10>w</span><span class=k1>a</span><span class=k2>r</span><span class=k4>t</span><span class=k1>e</span><span class=k3>sc</span><span class=k1>h</span><span class=k18>l</span><span class=k1>ange</span></div>
<div class="t c" style="left:462px;top:373px"><span class=k3>s</span><span class=k4>t</span><span class=k1>a</span><span class=k2>r</span><span class=k4>t</span><span class=k1>en</span></div>
<div class="t c" style="left:587px;top:360px"><span class=k6>A</span><span class=k1>u</span><span class=k4>f</span><span class=k1>gaben</span><span class=k10>w</span><span class=k1>a</span><span class=k2>r</span><span class=k4>t</span><span class=k1>e</span><span class=k3>sc</span><span class=k1>h</span><span class=k18>l</span><span class=k1>ange</span></div>
<div class="t c" style="left:587px;top:373px"><span class=k1>beenden</span></div>
<div class="t c g" style="left:689px;top:360px"><span class=k16>O</span><span class=k1>ne</span><span class=k0>N</span><span class=k1>o</span><span class=k4>t</span><span class=k1>e</span></div>
<div class="t c" style="left:736px;top:360px"><span class=k0>N</span><span class=k1>o</span><span class=k4>t</span><span class=k18>i</span><span class=k3>z</span><span class=k1>en</span></div>
<div class="t c" style="left:780px;top:360px"><span class=k19>L</span><span class=k18>i</span><span class=k1>n</span><span class=k3>ks</span></div>
<div class="t c" style="left:850px;top:360px"><span class=k6>A</span><span class=k3>k</span><span class=k4>t</span><span class=k1>ua</span><span class=k18>li</span><span class=k3>s</span><span class=k18>i</span><span class=k1>e</span><span class=k2>r</span><span class=k1>en</span></div>
<div class="t c" style="left:905px;top:360px"><span class=k7>F</span><span class=k18>il</span><span class=k4>t</span><span class=k1>e</span><span class=k2>r</span></div>
<div class="t c" style="left:905px;top:373px"><span class=k18>l</span><span class=k1>ö</span><span class=k3>sc</span><span class=k1>hen</span></div>
<div class="t" style="left:950px;top:326px"><span class=k17>G</span><span class=k1>ehe</span><span class=k5> </span><span class=k3>z</span><span class=k1>u</span></div>
<div class="t" style="left:950px;top:348px"><span class=k8>V</span><span class=k1>o</span><span class=k2>r</span><span class=k1>he</span><span class=k2>r</span><span class=k18>i</span><span class=k1>ge</span><span class=k2>r</span></div>
<div class="t" style="left:950px;top:370px"><span class=k0>N</span><span class=k1>ä</span><span class=k3>c</span><span class=k1>h</span><span class=k3>s</span><span class=k4>t</span><span class=k1>e</span><span class=k2>r</span></div>
<div class="t c gl" style="left:326px;top:390px"><span class=k8>V</span><span class=k1>e</span><span class=k2>r</span><span class=k10>w</span><span class=k1>a</span><span class=k18>l</span><span class=k4>t</span><span class=k1>en</span></div>
<div class="t c gl" style="left:526px;top:390px"><span class=k8>V</span><span class=k1>o</span><span class=k2>r</span><span class=k1>gang</span></div>
<div class="t c gl" style="left:733px;top:390px"><span class=k0>D</span><span class=k1>a</span><span class=k4>t</span><span class=k1>e</span><span class=k18>i</span><span class=k1>anhang</span><span class=k5> </span><span class=k1>an</span><span class=k3>z</span><span class=k1>e</span><span class=k18>i</span><span class=k1>gen</span></div>
<div class="t c gl" style="left:910px;top:390px"><span class=k8>S</span><span class=k1>e</span><span class=k18>i</span><span class=k4>t</span><span class=k1>e</span></div>


<!-- w2 icons -->
<svg class="a" style="left:275.5px;top:326px" width="28" height="28"><use href="#view"/></svg>
<svg class="a" style="left:314.5px;top:326.5px;color:#a4c2e4" width="11" height="11"><use href="#pencils"/></svg>
<svg class="a" style="left:311.5px;top:346px" width="14.5" height="15" viewBox="0 0 27 30"><path d="M6.5 14V29H26V10.5L19.5 4H14" fill="#fff" stroke="#727272" stroke-width="1.9"/><path d="M19.5 4V10.5H26" fill="none" stroke="#727272" stroke-width="1.6"/><use href="#star" x="0" y="0" width="14" height="14"/></svg>
<svg class="a" style="left:312.5px;top:369.5px" width="15" height="13.5" viewBox="0 0 29 27" preserveAspectRatio="none"><use href="#del"/><use href="#del" x=".7" y=".3"/></svg>
<svg class="a" style="left:457px;top:326px" width="17" height="27" viewBox="0 0 17 27"><path d="M0 .5L16 13.3L0 26Z" fill="#6fa890"/></svg>
<div class="a" style="left:576px;top:327px;width:25px;height:25px;background:#4a80be"></div>
<svg class="a" style="left:674px;top:325.5px" width="31" height="30"><use href="#onenote"/></svg>
<svg class="a" style="left:722px;top:326px" width="28" height="28"><use href="#note"/></svg>
<svg class="a" style="left:768.5px;top:326px" width="27" height="30"><use href="#linkdoc"/></svg>
<svg class="a" style="left:837px;top:326.5px;color:#6aaa94" width="26" height="26"><use href="#refresh"/></svg>
<svg class="a" style="left:890.5px;top:325px" width="32" height="31"><use href="#funnel"/></svg>
<svg class="a" style="left:933px;top:327px" width="12" height="10" viewBox="0 0 12 10"><path d="M0 5H10M6 1L10.5 5L6 9" fill="none" stroke="#3f7cc4" stroke-width="2.1"/></svg>
<svg class="a" style="left:935px;top:348px" width="8" height="12" viewBox="0 0 8 12"><path d="M8 0V12L0 6Z" fill="#3f7cc4"/></svg>
<svg class="a" style="left:935.5px;top:370px" width="8" height="12" viewBox="0 0 8 12"><path d="M0 0V12L8 6Z" fill="#3f7cc4"/></svg>
<!-- title -->
<div class="t" style="left:271px;top:419px;font-size:17px;line-height:20px;height:20px;color:#0a64c4;letter-spacing:-1.4px">THEREFORE</div>

<!-- Allgemein -->
<div class="a" style="left:268px;top:449px;width:837px;height:160px;border:1px solid #8cb8f8;background:#fff;box-shadow:0 0 0 1px #d2e2fb"></div>
<div class="a" style="left:269px;top:450px;width:835px;height:20px;background:#f7f3f7"></div>
<div class="t" style="left:273px;top:452px;font-size:13px;line-height:16px;height:16px;color:#333;letter-spacing:-0.15px">Allgemein</div>
<svg class="a" style="left:1087.5px;top:456px" width="8" height="7" viewBox="0 0 8 7"><path d="M.9 5.4L4 2.1L7.1 5.4" stroke="#2a2a2a" stroke-width="2.1" fill="none"/></svg>

<div class="t" style="left:281px;top:485px"><span class=k0>C</span><span class=k1>ode</span><span class=k4>:</span></div>
<div class="t" style="left:281px;top:509px"><span class=k8>B</span><span class=k1>e</span><span class=k3>sc</span><span class=k1>h</span><span class=k2>r</span><span class=k1>e</span><span class=k18>i</span><span class=k1>bung</span><span class=k4>:</span></div>
<div class="t" style="left:281px;top:533px"><span class=k8>K</span><span class=k1>a</span><span class=k4>t</span><span class=k1>ego</span><span class=k2>r</span><span class=k18>i</span><span class=k1>en</span><span class=k4>f</span><span class=k18>il</span><span class=k4>t</span><span class=k1>e</span><span class=k2>r</span><span class=k5> </span><span class=k4>f</span><span class=k1>ü</span><span class=k2>r</span><span class=k5> </span><span class=k6>A</span><span class=k1>u</span><span class=k4>f</span><span class=k1>gaben</span><span class=k10>w</span><span class=k1>a</span><span class=k2>r</span><span class=k4>t</span><span class=k1>e</span><span class=k3>sc</span><span class=k1>h</span><span class=k18>l</span><span class=k1>ange</span><span class=k4>:</span></div>
<div class="t" style="left:281px;top:556px"><span class=k17>G</span><span class=k1>e</span><span class=k3>s</span><span class=k4>t</span><span class=k1>a</span><span class=k2>r</span><span class=k4>t</span><span class=k1>e</span><span class=k4>t:</span></div>
<div class="t" style="left:281px;top:578px"><span class=k19>L</span><span class=k1>e</span><span class=k4>t</span><span class=k3>z</span><span class=k4>t</span><span class=k1>e</span><span class=k2>r</span><span class=k5> </span><span class=k0>H</span><span class=k1>e</span><span class=k2>r</span><span class=k3>zsc</span><span class=k1>h</span><span class=k18>l</span><span class=k1>ag</span><span class=k4>:</span></div>

<div class="inp" style="left:510px;top:481px;width:126px;height:20px"><span style="background:#0a246a;color:#fff"><span class=k7>T</span><span class=k0>H</span><span class=k8>E</span><span class=k0>R</span><span class=k8>E</span><span class=k7>F</span><span class=k16>O</span><span class=k0>R</span><span class=k8>E</span></span></div>
<div class="inp" style="left:510px;top:505px;width:188px;height:20px"><span><span class=k7>T</span><span class=k1>he</span><span class=k2>r</span><span class=k1>e</span><span class=k4>f</span><span class=k1>o</span><span class=k2>r</span><span class=k1>e</span></span></div>
<div class="inp" style="left:510px;top:529px;width:188px;height:20px"><span><span class=k7>T</span><span class=k0>H</span><span class=k8>E</span><span class=k0>R</span><span class=k8>E</span><span class=k7>F</span><span class=k16>O</span><span class=k0>R</span><span class=k8>E</span></span><div class="dd"></div></div>
<div class="cb" style="left:510px;top:556px;background:#d4d0c8"><svg class="a" style="left:2px;top:2px" width="7" height="7" viewBox="0 0 7 7"><path d="M.2 2.6L2.6 5L6.8 .8" stroke="#808080" stroke-width="2.1" fill="none"/></svg></div>
<div class="inp ro" style="left:510px;top:574px;width:188px;height:20px"><span><span class=k1>02</span><span class=k5>.</span><span class=k1>09</span><span class=k5>.</span><span class=k1>2016</span><span class=k5> </span><span class=k1>09</span><span class=k4>:</span><span class=k1>56</span></span></div>

<div class="t" style="left:732px;top:485px"><span class=k8>S</span><span class=k1>e</span><span class=k2>r</span><span class=k20>v</span><span class=k1>e</span><span class=k2>r</span><span class=k18>i</span><span class=k1>n</span><span class=k3>s</span><span class=k4>t</span><span class=k1>an</span><span class=k3>z</span><span class=k2>-</span><span class=k4>I</span><span class=k0>D</span><span class=k4>:</span></div>
<div class="t" style="left:732px;top:509px"><span class=k8>S</span><span class=k1>e</span><span class=k3>ss</span><span class=k18>i</span><span class=k1>on</span><span class=k2>-</span><span class=k4>I</span><span class=k0>D</span><span class=k4>:</span></div>
<div class="t" style="left:732px;top:532px"><span class=k6>A</span><span class=k1>u</span><span class=k3>s</span><span class=k4>f</span><span class=k1>üh</span><span class=k2>r</span><span class=k1>ung</span><span class=k5> </span><span class=k1>a</span><span class=k18>l</span><span class=k3>s</span><span class=k5> </span><span class=k8>B</span><span class=k1>enu</span><span class=k4>t</span><span class=k3>z</span><span class=k1>e</span><span class=k2>r-</span><span class=k4>I</span><span class=k0>D</span><span class=k4>:</span></div>
<div class="t" style="left:732px;top:552px"><span class=k6>A</span><span class=k1>u</span><span class=k3>s</span><span class=k4>f</span><span class=k1>üh</span><span class=k2>r</span><span class=k1>ung</span><span class=k5> </span><span class=k1>au</span><span class=k4>f</span><span class=k5> </span><span class=k8>S</span><span class=k1>e</span><span class=k2>r</span><span class=k20>v</span><span class=k1>e</span><span class=k2>r</span><span class=k3>c</span><span class=k1>o</span><span class=k9>m</span><span class=k1>pu</span><span class=k4>t</span><span class=k1>e</span><span class=k2>r</span><span class=k4>:</span></div>
<div class="t" style="left:732px;top:572px"><span class=k6>A</span><span class=k1>u</span><span class=k3>s</span><span class=k4>f</span><span class=k1>üh</span><span class=k2>r</span><span class=k1>ung</span><span class=k5> </span><span class=k18>i</span><span class=k1>n</span><span class=k5> </span><span class=k8>S</span><span class=k1>e</span><span class=k2>r</span><span class=k20>v</span><span class=k1>e</span><span class=k2>r</span><span class=k18>i</span><span class=k1>n</span><span class=k3>s</span><span class=k4>t</span><span class=k1>an</span><span class=k3>z</span><span class=k4>:</span></div>
<div class="inp ro" style="left:906px;top:481px;width:126px;height:20px"><span style="left:auto;right:4px"><span class=k1>6037</span></span></div>
<div class="inp ro" style="left:906px;top:505px;width:126px;height:20px"><span style="left:auto;right:4px"><span class=k1>21</span></span></div>
<div class="t lnk" style="left:908px;top:532px"><span class=k6>A</span><span class=k7>T</span><span class=k4>I</span><span class=k7>T</span><span class=k0>D</span><span class=k8>EV</span><span class=k4>\</span><span class=k9>M</span><span class=k4>I</span><span class=k8>S</span></div>
<div class="t lnk" style="left:908px;top:552px"><span class=k1>de</span><span class=k20>v</span><span class=k3>s</span><span class=k2>r</span><span class=k20>v</span><span class=k1>64</span><span class=k5>.</span><span class=k1>a</span><span class=k4>t</span><span class=k18>i</span><span class=k4>t</span><span class=k1>de</span><span class=k20>v</span><span class=k5>.</span><span class=k1>a</span><span class=k4>t</span></div>
<div class="t lnk" style="left:908px;top:572px"><span class=k1>na</span><span class=k20>v</span><span class=k1>2016_</span><span class=k4>t</span><span class=k1>he</span><span class=k2>r</span><span class=k1>e</span><span class=k4>f</span><span class=k1>o</span><span class=k2>r</span><span class=k1>e</span></div>

<!-- NAS -->
<div class="a" style="left:267px;top:610px;width:839px;height:22px;background:#f7f3f7"></div>
<div class="t" style="left:273px;top:613px;font-size:13px;line-height:16px;height:16px;color:#333;letter-spacing:-0.3px;margin-left:-.6px">NAS-Einstellungen</div>
<svg class="a" style="left:1087.5px;top:618px" width="8" height="7" viewBox="0 0 8 7"><path d="M.9 5.4L4 2.1L7.1 5.4" stroke="#2a2a2a" stroke-width="2.1" fill="none"/></svg>
<div class="t" style="left:281px;top:646px"><span class=k6>A</span><span class=k1>u</span><span class=k4>t</span><span class=k1>o</span><span class=k9>m</span><span class=k1>a</span><span class=k4>t</span><span class=k18>i</span><span class=k3>sc</span><span class=k1>h</span><span class=k5> </span><span class=k20>v</span><span class=k1>on</span><span class=k5> </span><span class=k0>N</span><span class=k6>A</span><span class=k8>S</span><span class=k5> </span><span class=k3>s</span><span class=k4>t</span><span class=k1>a</span><span class=k2>r</span><span class=k4>t</span><span class=k1>en</span><span class=k4>:</span></div>
<div class="t" style="left:281px;top:668px"><span class=k6>A</span><span class=k1>u</span><span class=k4>f</span><span class=k5> </span><span class=k1>d</span><span class=k18>i</span><span class=k1>e</span><span class=k3>s</span><span class=k1>e</span><span class=k9>m</span><span class=k5> </span><span class=k0>N</span><span class=k6>A</span><span class=k8>S</span><span class=k2>-</span><span class=k0>C</span><span class=k1>o</span><span class=k9>m</span><span class=k1>pu</span><span class=k4>t</span><span class=k1>e</span><span class=k2>r</span><span class=k5> </span><span class=k3>s</span><span class=k4>t</span><span class=k1>a</span><span class=k2>r</span><span class=k4>t</span><span class=k1>en</span><span class=k4>:</span></div>
<div class="cb" style="left:510px;top:646px"></div>
<div class="inp" style="left:510px;top:664px;width:188px;height:20px"><span><span class=k1>de</span><span class=k20>v</span><span class=k3>s</span><span class=k2>r</span><span class=k20>v</span><span class=k1>64</span><span class=k5>.</span><span class=k1>a</span><span class=k4>t</span><span class=k18>i</span><span class=k4>t</span><span class=k1>de</span><span class=k20>v</span><span class=k5>.</span><span class=k1>a</span><span class=k4>t</span></span><div class="dd"></div></div>
<div class="t" style="left:732px;top:647px"><span class=k4>I</span><span class=k1>n</span><span class=k5> </span><span class=k1>d</span><span class=k18>i</span><span class=k1>e</span><span class=k3>s</span><span class=k1>e</span><span class=k2>r</span><span class=k5> </span><span class=k0>N</span><span class=k6>A</span><span class=k8>S</span><span class=k2>-</span><span class=k4>I</span><span class=k1>n</span><span class=k3>s</span><span class=k4>t</span><span class=k1>an</span><span class=k3>z</span><span class=k5> </span><span class=k3>s</span><span class=k4>t</span><span class=k1>a</span><span class=k2>r</span><span class=k4>t</span><span class=k1>en</span><span class=k4>:</span></div>
<div class="inp" style="left:906px;top:643px;width:190px;height:20px"><span><span class=k1>na</span><span class=k20>v</span><span class=k1>2016_</span><span class=k4>t</span><span class=k1>he</span><span class=k2>r</span><span class=k1>e</span><span class=k4>f</span><span class=k1>o</span><span class=k2>r</span><span class=k1>e</span></span><div class="dd"></div></div>

<!-- OK -->
<div class="a" style="left:1032px;top:754px;width:75px;height:23px;background:#d4d0c8;border:1px solid;border-color:#fff #404040 #404040 #fff;box-shadow:inset -1px -1px 0 #808080"></div>
<div class="t c" style="left:1068px;top:759px"><span class=k16>O</span><span class=k8>K</span></div>

</div></body></html>
